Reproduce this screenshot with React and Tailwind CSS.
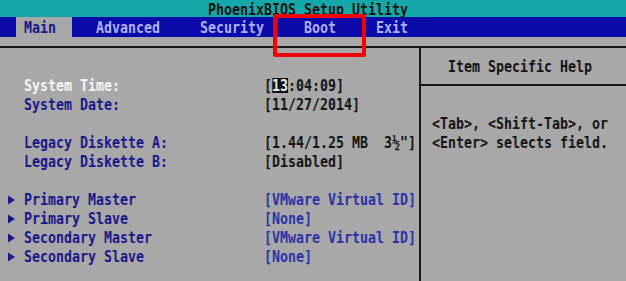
import React from "react";

function T({ children, className = "" }) {
  return (
    <span className={"inline-block whitespace-pre origin-left scale-x-[0.83] " + className}>
      {children}
    </span>
  );
}

function Tri() {
  return (
    <svg width="8" height="10" viewBox="0 0 8 10" className="ml-[8px] shrink-0">
      <polygon points="0,0.5 7,5 0,9.5" fill="#18188a" />
    </svg>
  );
}

function Row({ arrow, label, labelClass = "text-[#18188a]", children }) {
  return (
    <div className="flex h-[19px] leading-[19px]">
      <div className="flex w-[24px] shrink-0 items-center">{arrow ? <Tri /> : null}</div>
      <div className="w-[240px] shrink-0">
        {label ? <T className={labelClass}>{label}</T> : null}
      </div>
      <div className="flex-1">{children}</div>
    </div>
  );
}

export default function App() {
  return (
    <div className="relative h-[281px] w-[626px] overflow-hidden bg-[#a8a8a8] font-['DejaVu_Sans_Mono',monospace] text-[16px] font-bold">
      {/* title bar */}
      <div className="h-[17px] overflow-hidden bg-[#14a8a8] pl-[208px] leading-[19px] text-[#121212]">
        <T>PhoenixBIOS Setup Utility</T>
      </div>

      {/* menu bar */}
      <div className="flex h-[20px] bg-[#0a0aa8] leading-[18px] text-[#b0b0f4]">
        <div className="w-[16px] shrink-0" />
        <div className="w-[56px] shrink-0 bg-[#a8a8a8] pl-[8px] pt-[2px] text-[#18188a]">
          <T>Main</T>
        </div>
        <div className="w-[128px] shrink-0 pl-[24px] pt-[2px]">
          <T>Advanced</T>
        </div>
        <div className="w-[104px] shrink-0 pt-[2px]">
          <T>Security</T>
        </div>
        <div className="w-[72px] shrink-0 pt-[2px]">
          <T>Boot</T>
        </div>
        <div className="shrink-0 pt-[2px]">
          <T>Exit</T>
        </div>
      </div>

      {/* body */}
      <div className="mt-[9px] h-[2px] bg-[#161616]" />
      <div className="flex h-[235px]">
        <div className="w-[419px] shrink-0 pt-[9px] text-[#141414]">
          <Row />
          <Row label="System Time:" labelClass="text-[#f6f6f6]">
            <T>
              [<span className="inline-block bg-[#101010] leading-[15px] text-[#e8e8e8]">13</span>:04:09]
            </T>
          </Row>
          <Row label="System Date:">
            <T>[11/27/2014]</T>
          </Row>
          <Row />
          <Row label="Legacy Diskette A:">
            <T>{"[1.44/1.25 MB  3\u00bd\"]"}</T>
          </Row>
          <Row label="Legacy Diskette B:">
            <T>[Disabled]</T>
          </Row>
          <Row />
          <Row arrow label="Primary Master">
            <T className="text-[#2a32a8]">[VMware Virtual ID]</T>
          </Row>
          <Row arrow label="Primary Slave">
            <T className="text-[#2a32a8]">[None]</T>
          </Row>
          <Row arrow label="Secondary Master">
            <T className="text-[#2a32a8]">[VMware Virtual ID]</T>
          </Row>
          <Row arrow label="Secondary Slave">
            <T className="text-[#2a32a8]">[None]</T>
          </Row>
        </div>
        <div className="w-[2px] shrink-0 bg-[#161616]" />
        <div className="flex-1 pt-[9px] text-[#141414]">
          <div className="h-[19px] pl-[27px] leading-[19px]">
            <T>Item Specific Help</T>
          </div>
          <div className="h-[8px]" />
          <div className="h-[2px] bg-[#161616]" />
          <div className="h-[28px]" />
          <div className="h-[19px] pl-[11px] leading-[19px]">
            <T>{"<Tab>, <Shift-Tab>, or"}</T>
          </div>
          <div className="h-[19px] pl-[11px] leading-[19px]">
            <T>{"<Enter> selects field."}</T>
          </div>
        </div>
      </div>

      {/* red annotation box */}
      <div className="absolute left-[273px] top-[14px] h-[43px] w-[93px] rounded-[2px] border-[4px] border-[#f40000]" />
    </div>
  );
}
